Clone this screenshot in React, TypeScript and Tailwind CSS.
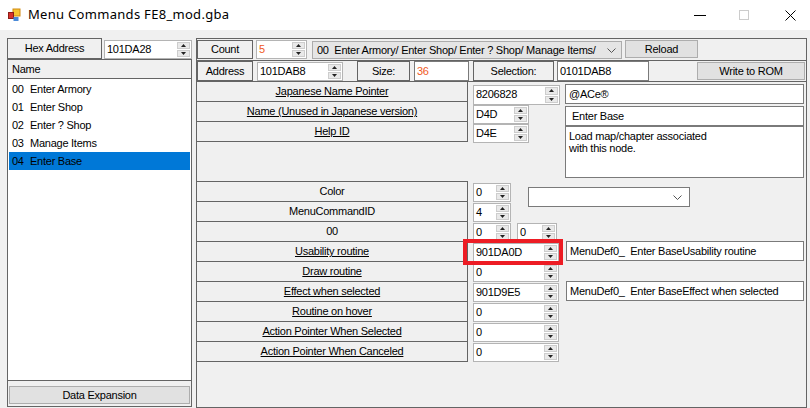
import React from "react";

const items = [
  { id: "00", name: "Enter Armory" },
  { id: "01", name: "Enter Shop" },
  { id: "02", name: "Enter ? Shop" },
  { id: "03", name: "Manage Items" },
  { id: "04", name: "Enter Base" },
];

const Spin = () => (
  <div className="flex flex-col w-[14px] shrink-0 py-px pr-px gap-px">
    <div className="flex-1 flex items-center justify-center bg-[#e9e9e9] border border-[#cdcdcd]">
      <svg width="5" height="3" viewBox="0 0 5 3"><path d="M2.5 0L5 3H0z" fill="#222" /></svg>
    </div>
    <div className="flex-1 flex items-center justify-center bg-[#e9e9e9] border border-[#cdcdcd]">
      <svg width="5" height="3" viewBox="0 0 5 3"><path d="M0 0H5L2.5 3z" fill="#222" /></svg>
    </div>
  </div>
);

const Num = ({ v, className = "", tone = "text-black" }: { v: string; className?: string; tone?: string }) => (
  <div className={`flex h-[19px] bg-white border border-[#b4b4b4] shrink-0 ${className}`}>
    <span className={`flex-1 min-w-0 pl-[2px] leading-[17px] whitespace-nowrap overflow-hidden ${tone}`}>{v}</span>
    <Spin />
  </div>
);

const Text = ({ v, className = "" }: { v: string; className?: string }) => (
  <div className={`h-[20px] bg-white border border-[#7a7a7a] leading-[18px] whitespace-pre overflow-hidden shrink-0 ${className}`}>{v}</div>
);

const Tag = ({ t, className = "" }: { t: string; className?: string }) => (
  <div className={`border border-[#646464] flex items-center justify-center shrink-0 ${className}`}>{t}</div>
);

const Cell = ({ t, link = true }: { t: string; link?: boolean }) => (
  <div className="w-[271px] h-[20px] shrink-0 border-b border-r border-[#646464] flex items-center justify-center">
    <span className={link ? "underline underline-offset-1" : ""}>{t}</span>
  </div>
);

const Chevron = () => (
  <svg width="9" height="5" viewBox="0 0 9 5" className="shrink-0">
    <path d="M0.5 0.5L4.5 4.5L8.5 0.5" fill="none" stroke="#555" strokeWidth="1" />
  </svg>
);

const Btn = ({ t, className = "" }: { t: string; className?: string }) => (
  <div className={`bg-[#e1e1e1] border border-[#adadad] flex items-center justify-center shrink-0 ${className}`}>{t}</div>
);

export default function App() {
  return (
    <div className="w-[810px] h-[408px] overflow-hidden bg-[#f0f0f0] text-black text-[11px] tracking-[-0.25px] font-['Liberation_Sans',Arial,sans-serif]">
      {/* title bar */}
      <div className="h-[30px] bg-white flex items-center">
        <svg width="14" height="14" viewBox="0 0 14 14" className="ml-[7px]">
          <rect x="6" y="1" width="7" height="7" fill="#f7c531" stroke="#d08a12" />
          <rect x="1.5" y="4.5" width="5" height="6" fill="#d8322b" stroke="#8c1d18" />
          <rect x="6.5" y="9" width="5" height="4" fill="#4a8ad8" />
        </svg>
        <span className="ml-[7px] text-[13px] tracking-[0.3px] font-['Noto_Sans',sans-serif]">Menu Commands FE8_mod.gba</span>
        <div className="ml-auto flex items-center pr-[14px]">
          <div className="w-[12px] h-px bg-black" />
          <div className="ml-[33px] w-[10px] h-[10px] border border-[#cccccc]" />
          <svg width="11" height="11" viewBox="0 0 11 11" className="ml-[36px]">
            <path d="M0.5 0.5L10.5 10.5M10.5 0.5L0.5 10.5" stroke="#000" strokeWidth="1" />
          </svg>
        </div>
      </div>

      <div className="flex pt-[8px] pl-[7px] gap-[4px]">
        {/* left column */}
        <div className="w-[185px] flex flex-col">
          <div className="flex h-[21px] items-start">
            <Tag t="Hex Address" className="w-[95px] h-[21px]" />
            <Num v="101DA28" className="ml-[2px] w-[88px] mt-[2px]" />
          </div>
          <div className="h-[348px] border border-[#646464] flex flex-col">
            <div className="h-[19px] border-b border-[#646464] flex items-center pl-[4px]">Name</div>
            <div className="flex-1 bg-white border-b border-[#646464] pt-px px-px">
              {items.map((it) => (
                <div key={it.id} className={`h-[18px] flex items-center pl-[3px] ${it.id === "04" ? "bg-[#0078d7]" : ""}`}>
                  <span className="w-[18px]">{it.id}</span>
                  <span>{it.name}</span>
                </div>
              ))}
            </div>
            <div className="h-[25px] pt-[5px] px-px">
              <Btn t="Data Expansion" className="w-[181px] h-[18px]" />
            </div>
          </div>
        </div>

        {/* right column */}
        <div className="w-[611px] flex flex-col">
          <div className="h-[22px] border-t border-x border-[#646464] flex items-start pt-px">
            <Tag t="Count" className="w-[56px] h-[19px]" />
            <Num v="5" tone="text-[#f05a1e]" className="ml-[3px] w-[51px]" />
            <div className="ml-[5px] w-[310px] h-[18px] mt-px bg-[#e5e5e5] border border-[#acacac] flex items-center pl-[4px] pr-[5px] gap-[4px]">
              <span className="flex-1 min-w-0 whitespace-pre overflow-hidden">00  Enter Armory/ Enter Shop/ Enter ? Shop/ Manage Items/</span>
              <Chevron />
            </div>
            <Btn t="Reload" className="ml-[3px] w-[73px] h-[18px]" />
          </div>
          <div className="h-[21px] border-t border-x border-[#646464] flex items-start">
            <Tag t="Address" className="w-[56px] h-[20px]" />
            <Num v="101DAB8" className="ml-[4px] w-[86px] mt-px" />
            <Tag t="Size:" className="ml-[14px] w-[53px] h-[20px]" />
            <Text v="36" className="ml-[4px] w-[55px] pl-[2px] text-[#f05a1e]" />
            <Tag t="Selection:" className="ml-[4px] w-[81px] h-[20px]" />
            <Text v="0101DAB8" className="ml-[3px] w-[92px] pl-[2px]" />
            <Btn t="Write to ROM" className="ml-[48px] w-[108px] h-[18px] mt-px" />
          </div>
          <div className="h-[327px] border border-[#646464] flex flex-col">
            {/* top section */}
            <div className="h-[99px] flex">
              <div className="w-[271px] flex flex-col">
                <Cell t="Japanese Name Pointer" />
                <Cell t="Name (Unused in Japanese version)" />
                <Cell t="Help ID" />
              </div>
              <div className="w-[87px] ml-[5px] pt-[3px] flex flex-col">
                <Num v="8206828" className="w-[87px] h-[20px]" />
                <Num v="D4D" className="w-[56px]" />
                <Num v="D4E" className="w-[56px]" />
              </div>
              <div className="ml-[5px] pt-[2px] flex flex-col">
                <Text v="@ACe®" className="w-[239px] pl-[3px]" />
                <Text v="Enter Base" className="w-[239px] pl-[6px] mt-[2px]" />
                <div className="w-[239px] h-[52px] bg-white border border-[#7a7a7a] pl-[3px] pt-[3px] leading-[12px]">
                  Load map/chapter associated
                  <br />
                  with this node.
                </div>
              </div>
            </div>
            <div className="w-[271px] h-px bg-[#646464]" />

            {/* bottom rows */}
            <div className="flex h-[20px] items-start">
              <Cell t="Color" link={false} />
              <Num v="0" className="ml-[5px] w-[38px] mt-px" />
              <div className="ml-[17px] mt-[5px] w-[162px] h-[20px] bg-white border border-[#7a7a7a] flex items-center justify-end pr-[7px]">
                <Chevron />
              </div>
            </div>
            <div className="flex h-[20px] items-start">
              <Cell t="MenuCommandID" link={false} />
              <Num v="4" className="ml-[5px] w-[38px] mt-px" />
            </div>
            <div className="flex h-[20px] items-start">
              <Cell t="00" link={false} />
              <Num v="0" className="ml-[5px] w-[38px] mt-px" />
              <Num v="0" className="ml-[6px] w-[40px] mt-px" />
            </div>
            <div className="flex h-[20px] items-start">
              <Cell t="Usability routine" />
              <div className="relative ml-[5px] mt-px">
                <Num v="901DA0D" className="w-[86px]" />
                <div className="absolute left-[-10px] top-[-4px] right-[-4px] bottom-[-3px] border-[4px] border-[#ed1c24]" />
              </div>
              <Text v="MenuDef0_  Enter BaseUsability routine" className="ml-[7px] w-[238px] pl-[3px] -mt-px" />
            </div>
            <div className="flex h-[20px] items-start">
              <Cell t="Draw routine" />
              <Num v="0" className="ml-[5px] w-[86px] mt-px" />
            </div>
            <div className="flex h-[20px] items-start">
              <Cell t="Effect when selected" />
              <Num v="901D9E5" className="ml-[5px] w-[86px] mt-px" />
              <Text v="MenuDef0_  Enter BaseEffect when selected" className="ml-[7px] w-[238px] pl-[3px] -mt-px" />
            </div>
            <div className="flex h-[20px] items-start">
              <Cell t="Routine on hover" />
              <Num v="0" className="ml-[5px] w-[86px] mt-px" />
            </div>
            <div className="flex h-[20px] items-start">
              <Cell t="Action Pointer When Selected" />
              <Num v="0" className="ml-[5px] w-[86px] mt-px" />
            </div>
            <div className="flex h-[20px] items-start">
              <Cell t="Action Pointer When Canceled" />
              <Num v="0" className="ml-[5px] w-[86px] mt-px" />
            </div>
          </div>
        </div>
      </div>
    </div>
  );
}
